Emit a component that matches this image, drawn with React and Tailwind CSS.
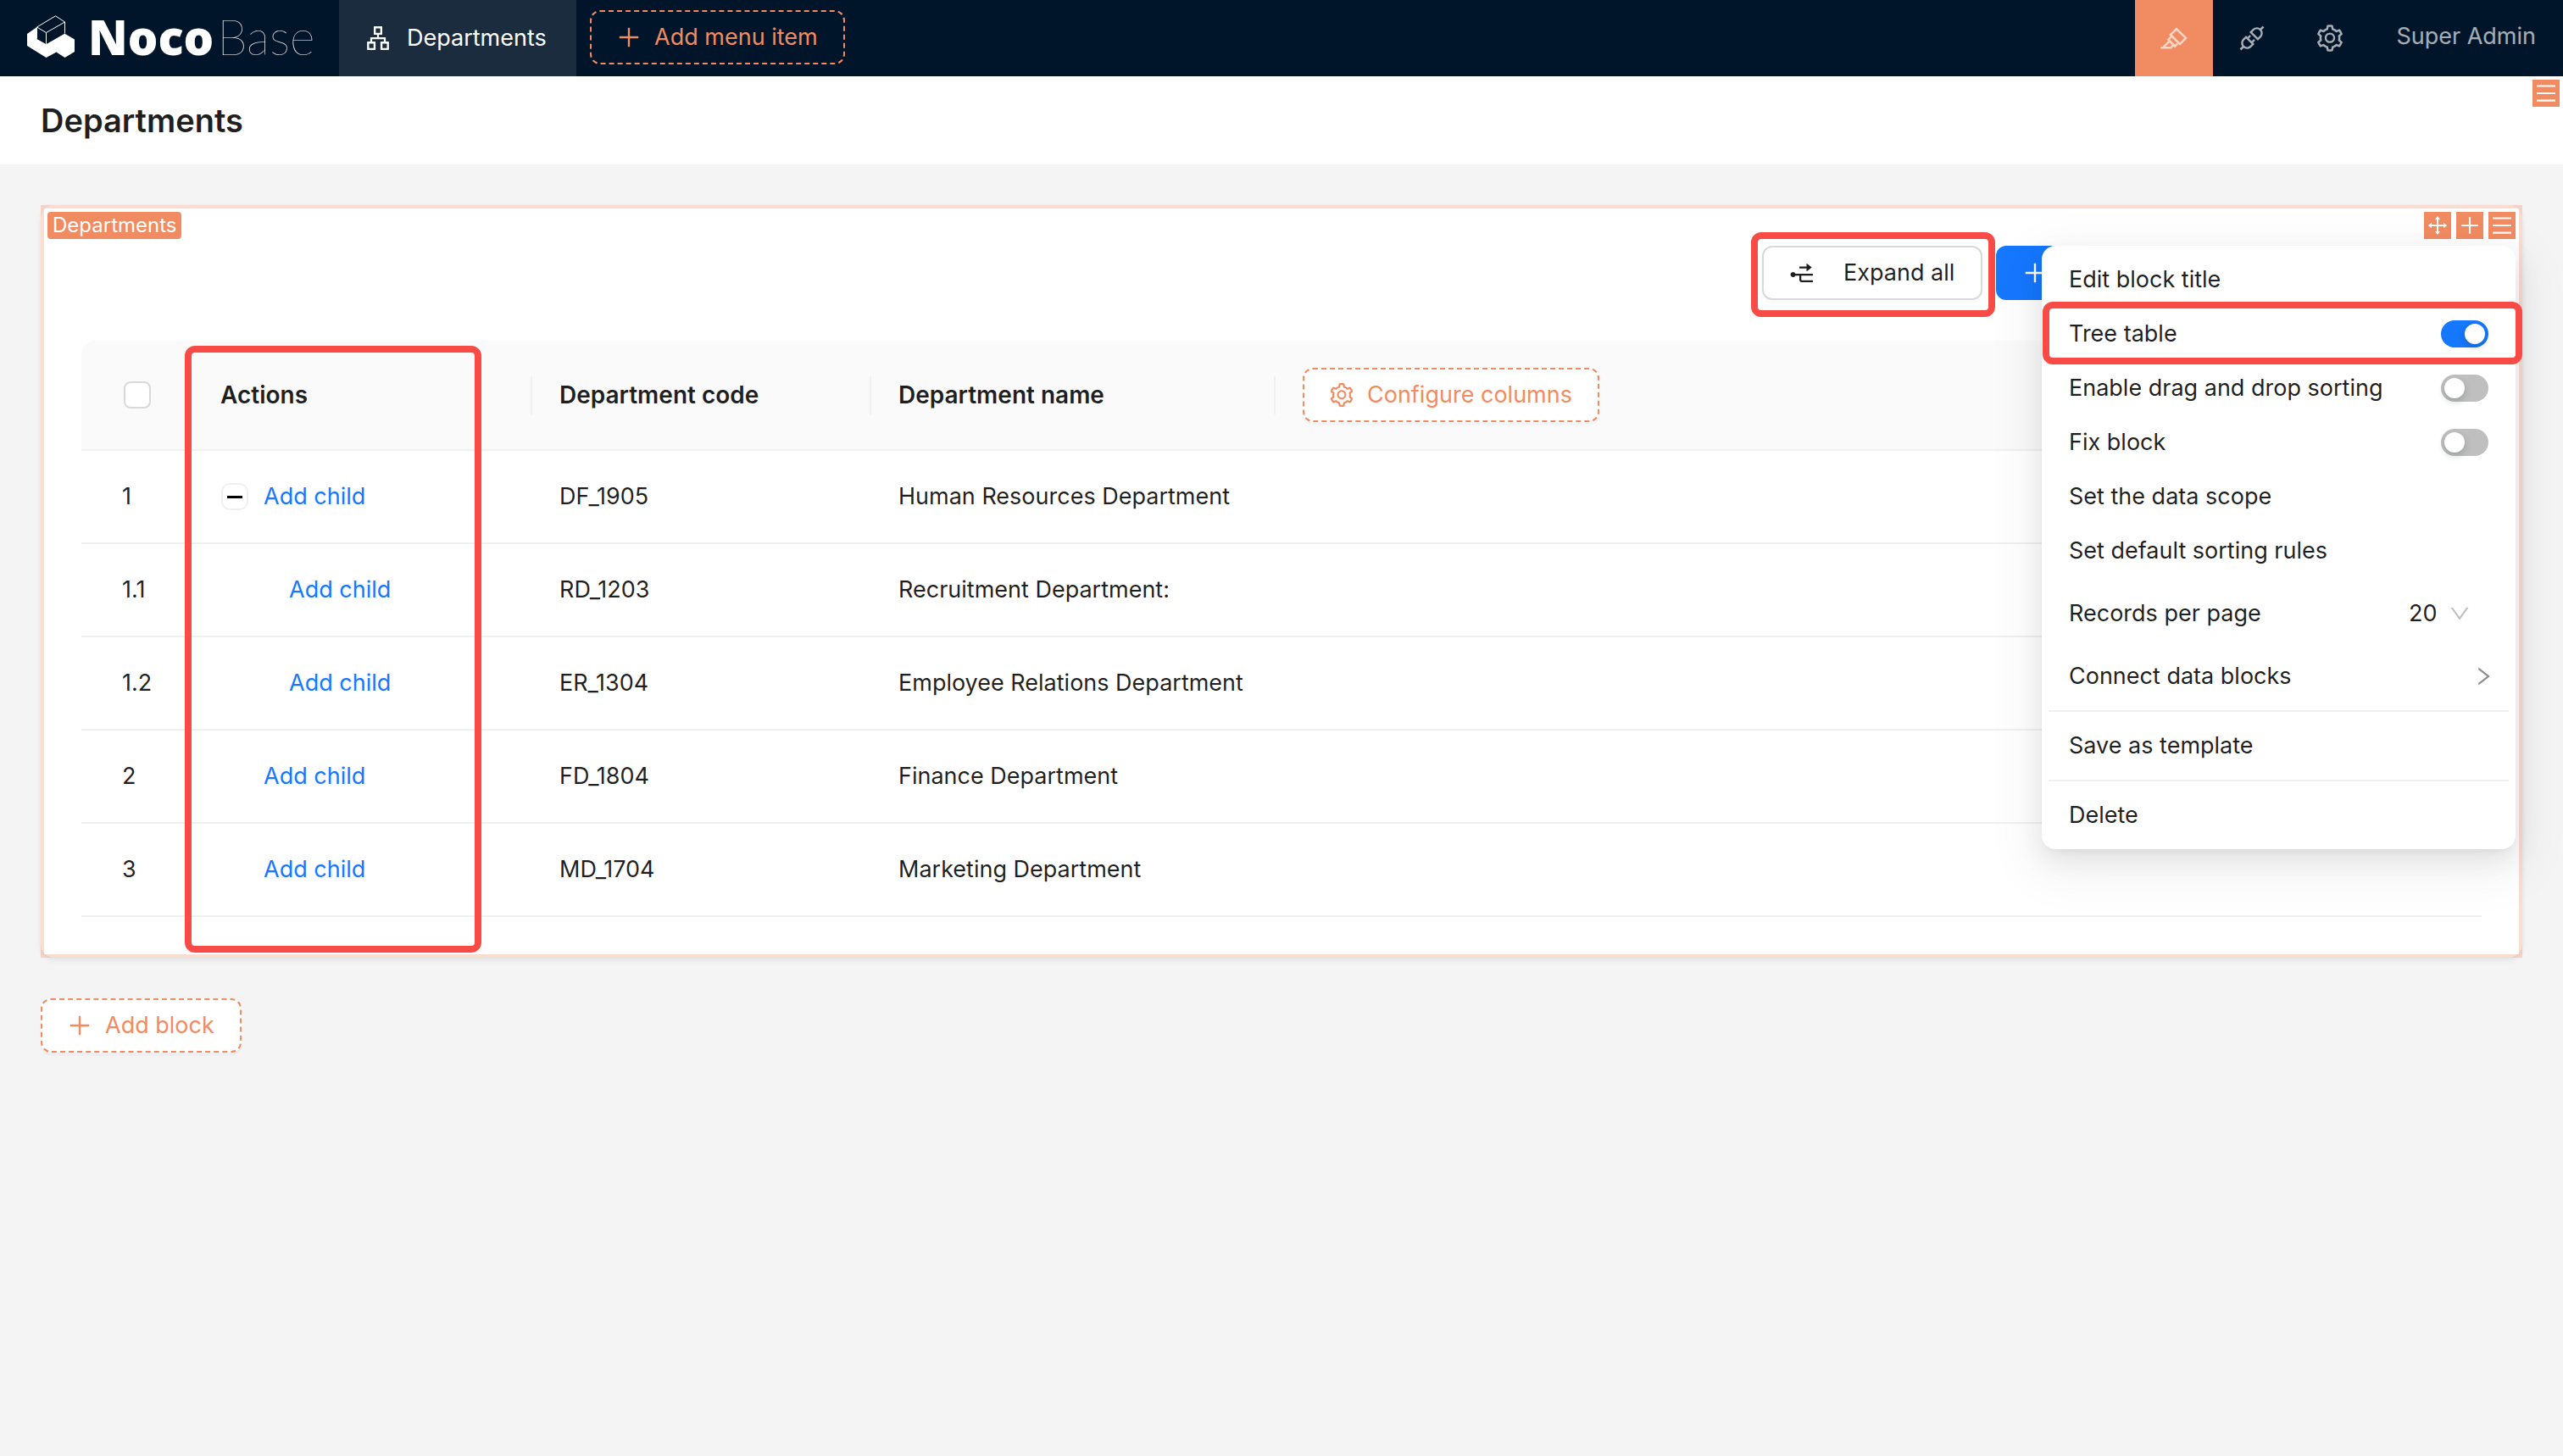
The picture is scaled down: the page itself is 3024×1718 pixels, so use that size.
import {
  AiOutlineApartment,
  AiOutlineApi,
  AiOutlineDown,
  AiOutlineDrag,
  AiOutlineHighlight,
  AiOutlineMenu,
  AiOutlineNodeExpand,
  AiOutlinePlus,
  AiOutlineRight,
  AiOutlineSetting,
} from "react-icons/ai";

const ROWS = [
  { no: "1", level: 0, open: true, code: "DF_1905", name: "Human Resources Department" },
  { no: "1.1", level: 1, code: "RD_1203", name: "Recruitment Department:" },
  { no: "1.2", level: 1, code: "ER_1304", name: "Employee Relations Department" },
  { no: "2", level: 0, code: "FD_1804", name: "Finance Department" },
  { no: "3", level: 0, code: "MD_1704", name: "Marketing Department" },
];

function Logo() {
  return (
    <a href="#home" aria-label="NocoBase" className="flex w-[400px] items-center pb-1 pl-8 text-white">
      <svg viewBox="0 0 56 50" className="h-[50px] w-14 shrink-0" fill="none">
        <path
          d="M0 22 11.500 14V28L22.500 34 44 21.500 56 28.500V43L44.500 50 34.500 43.500 22.500 50 0 36Z"
          fill="currentColor"
        />
        <path d="M11.500 14 33.500 .8 44.500 8v13.500L22.500 34 11.500 27.500Z" fill="#001529" />
        <path
          d="M11.500 27.500V14L33.500 .8 44.500 8V21.500M44.500 8 22.500 20.500 11.500 14M22.500 20.500V34"
          stroke="currentColor"
          strokeWidth="1"
        />
      </svg>
      <span className="ml-4 font-['Open_Sans'] text-[56px] leading-[84px] font-extrabold">Noco</span>
      <span className="ml-1 font-['Lato'] text-[57px] leading-[84px] font-thin">Base</span>
    </a>
  );
}

function DashedButton({ icon: Icon, children, className = "" }) {
  return (
    <button
      type="button"
      className={`flex h-16 items-center gap-3.5 rounded-xl border-2 border-dashed border-[#f18b62] pr-[30px] pl-7 text-[#f18b62] ${className}`}
    >
      <Icon className="size-8" />
      {children}
    </button>
  );
}

function TopBar() {
  return (
    <header className="flex h-[90px] items-stretch bg-[#001529]">
      <Logo />
      <a href="#departments" className="flex w-[280px] items-center gap-[18px] bg-[#1a2c3e] pl-[30px] text-white">
        <AiOutlineApartment className="size-8" />
        Departments
      </a>
      <DashedButton icon={AiOutlinePlus} className="mt-3 ml-4">
        Add menu item
      </DashedButton>
      <div className="ml-auto flex items-stretch text-white/65">
        <button type="button" aria-label="UI editor" className="flex w-[92px] items-center justify-center bg-[#f18b62]">
          <AiOutlineHighlight className="size-9" />
        </button>
        <button type="button" aria-label="Plugin manager" className="flex w-[92px] items-center justify-center">
          <AiOutlineApi className="size-9" />
        </button>
        <button type="button" aria-label="Settings" className="flex w-[92px] items-center justify-center">
          <AiOutlineSetting className="size-9" />
        </button>
        <button type="button" className="px-8 pb-1">
          Super Admin
        </button>
      </div>
    </header>
  );
}

function ToolIcon({ icon: Icon, label }) {
  return (
    <button type="button" aria-label={label} className="flex size-8 items-center justify-center bg-[#f18b62] text-white">
      <Icon className="size-7" />
    </button>
  );
}

function Highlight({ className }) {
  return <div className={`pointer-events-none absolute rounded-xl border-8 border-[#f94b46] ${className}`} />;
}

function MenuItem({ children }) {
  return (
    <button type="button" role="menuitem" className="flex h-16 w-full items-center justify-between px-6 text-left">
      {children}
    </button>
  );
}

function SwitchItem({ label, checked = false }) {
  return (
    <label className="flex h-16 items-center justify-between px-6">
      {label}
      <span className="relative flex h-8 w-14">
        <input
          type="checkbox"
          role="switch"
          defaultChecked={checked}
          className="peer size-full appearance-none rounded-full bg-[#bfbfbf] checked:bg-[#1677ff]"
        />
        <span className="pointer-events-none absolute top-1 left-1 size-6 rounded-full bg-white shadow-[0_4px_8px_rgba(0,35,11,0.2)] peer-checked:left-7" />
      </span>
    </label>
  );
}

function SettingsMenu() {
  return (
    <div
      role="menu"
      className="absolute top-10 right-0 w-[559px] rounded-2xl bg-white p-2 shadow-[0_12px_32px_0_rgba(0,0,0,0.08),0_6px_12px_-8px_rgba(0,0,0,0.12),0_18px_56px_16px_rgba(0,0,0,0.05)]"
    >
      <MenuItem>Edit block title</MenuItem>
      <div className="relative">
        <SwitchItem label="Tree table" checked />
        <Highlight className="-top-1.5 -right-4 -bottom-1 -left-[7px]" />
      </div>
      <SwitchItem label="Enable drag and drop sorting" />
      <SwitchItem label="Fix block" />
      <MenuItem>Set the data scope</MenuItem>
      <MenuItem>Set default sorting rules</MenuItem>
      <label className="flex h-[84px] items-center justify-between pr-11 pl-6">
        Records per page
        <span className="relative flex items-center">
          <select defaultValue="20" className="w-[74px] appearance-none bg-transparent">
            <option>10</option>
            <option>20</option>
            <option>50</option>
          </select>
          <AiOutlineDown className="pointer-events-none absolute right-0 size-7 text-black/25" />
        </span>
      </label>
      <MenuItem>
        Connect data blocks
        <AiOutlineRight className="-mr-2 size-7 text-black/45" />
      </MenuItem>
      <hr className="my-2 border-t-2 border-[#f0f0f0]" />
      <MenuItem>Save as template</MenuItem>
      <hr className="my-2 border-t-2 border-[#f0f0f0]" />
      <MenuItem>Delete</MenuItem>
    </div>
  );
}

function HeadCell({ children, divider = true, className = "" }) {
  return (
    <th className={`p-0 ${className}`}>
      <div className={`flex h-[45px] items-center pl-8 ${divider ? "border-r-2 border-[#f0f0f0]" : ""}`}>{children}</div>
    </th>
  );
}

function DepartmentTable() {
  return (
    <div className="relative">
      <table className="w-full table-fixed border-separate border-spacing-0 text-left">
        <thead>
          <tr className="h-[130px] *:border-b-2 *:border-[#f0f0f0] *:bg-[#fafafa]">
            <th className="w-[132px] rounded-tl-2xl p-0">
              <input
                type="checkbox"
                aria-label="Select all"
                className="ml-[50px] block size-8 appearance-none rounded-lg border-2 border-[#d9d9d9] bg-white"
              />
            </th>
            <HeadCell className="w-[400px] text-[28px] font-semibold">Actions</HeadCell>
            <HeadCell className="w-[400px] text-[28px] font-semibold">Department code</HeadCell>
            <HeadCell className="w-[477px] text-[28px] font-semibold">Department name</HeadCell>
            <HeadCell divider={false} className="rounded-tr-2xl font-normal">
              <DashedButton icon={AiOutlineSetting} className="bg-white shadow-[0_4px_0_rgba(0,0,0,0.02)]">
                Configure columns
              </DashedButton>
            </HeadCell>
          </tr>
        </thead>
        <tbody>
          {ROWS.map((row) => (
            <tr key={row.no} className="h-[110px] *:border-b-2 *:border-[#f0f0f0]">
              <td className="pl-12">{row.no}</td>
              <td className="pl-[33px]">
                <div className={`flex items-center gap-[18px] ${row.level ? "pl-[30px]" : ""}`}>
                  {row.open ? (
                    <button
                      type="button"
                      aria-label="Collapse row"
                      className="flex size-8 items-center justify-center rounded-[10px] border-2 border-[#f0f0f0]"
                    >
                      <span className="h-[3px] w-[18px] bg-black" />
                    </button>
                  ) : (
                    <span className="size-8" />
                  )}
                  <a href="#add-child" className="text-[#1677ff]">
                    Add child
                  </a>
                </div>
              </td>
              <td className="pl-8">{row.code}</td>
              <td className="pl-8">{row.name}</td>
              <td />
            </tr>
          ))}
        </tbody>
      </table>
      <Highlight className="top-1.5 -bottom-[42px] left-[122px] w-[350px]" />
    </div>
  );
}

function TableBlock() {
  return (
    <section className="relative rounded-2xl bg-white p-12 shadow-[0_2px_4px_rgba(0,0,0,0.03),0_2px_12px_-2px_rgba(0,0,0,0.04),0_4px_8px_rgba(0,0,0,0.03)]">
      <div className="pointer-events-none absolute inset-0 border-4 border-[#f18b62]/30" />
      <span className="absolute top-2 left-2 rounded-sm bg-[#f18b62] px-1.5 text-[24px] leading-8 text-white">
        Departments
      </span>
      <div className="mb-12 flex h-16 justify-end gap-4">
        <div className="relative">
          <button
            type="button"
            className="flex h-16 w-[260px] items-center gap-[34px] rounded-xl border-2 border-[#d9d9d9] bg-white pl-7 shadow-[0_4px_0_rgba(0,0,0,0.02)]"
          >
            <AiOutlineNodeExpand className="size-8" />
            Expand all
          </button>
          <Highlight className="-top-4 -right-[15px] -bottom-5 -left-[13px]" />
        </div>
        <button type="button" aria-label="Add new" className="flex w-[573px] items-center rounded-xl bg-[#1677ff] pl-[30px] text-white">
          <AiOutlinePlus className="size-8" />
        </button>
      </div>
      <DepartmentTable />
      <div className="absolute top-2 right-2 z-10 flex gap-1.5">
        <ToolIcon icon={AiOutlineDrag} label="Drag" />
        <ToolIcon icon={AiOutlinePlus} label="Insert" />
        <ToolIcon icon={AiOutlineMenu} label="Block settings" />
        <SettingsMenu />
      </div>
    </section>
  );
}

export default function App() {
  return (
    <div className="min-h-screen bg-[#f4f4f4] font-['Inter',sans-serif] text-[27px] leading-11 text-black/88">
      <TopBar />
      <div className="relative bg-white px-12 py-[26px]">
        <h1 className="text-[38px] leading-[52px] font-semibold">Departments</h1>
        <div className="absolute top-1 right-1">
          <ToolIcon icon={AiOutlineMenu} label="Page settings" />
        </div>
      </div>
      <main className="flex flex-col items-start gap-12 p-12 *:first:self-stretch">
        <TableBlock />
        <DashedButton icon={AiOutlinePlus} className="bg-white shadow-[0_4px_0_rgba(0,0,0,0.02)]">
          Add block
        </DashedButton>
      </main>
    </div>
  );
}
